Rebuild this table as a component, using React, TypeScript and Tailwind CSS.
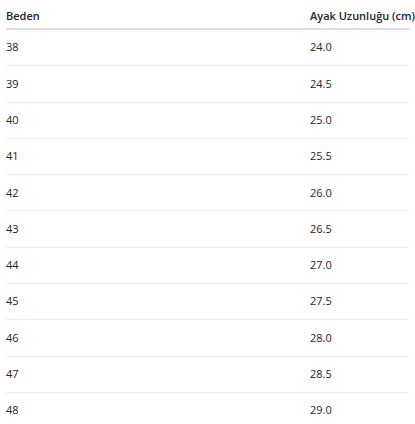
import React from "react";

const rows: [string, string][] = [
  ["38", "24.0"],
  ["39", "24.5"],
  ["40", "25.0"],
  ["41", "25.5"],
  ["42", "26.0"],
  ["43", "26.5"],
  ["44", "27.0"],
  ["45", "27.5"],
  ["46", "28.0"],
  ["47", "28.5"],
  ["48", "29.0"],
];

export default function App() {
  return (
    <div
      className="bg-white px-[6px] text-[11px] text-[#212529]"
      style={{ fontFamily: '"Open Sans", "Noto Sans", sans-serif' }}
    >
      <div className="grid h-[30px] grid-cols-[304px_1fr] items-center border-b-2 border-[#dedede] pt-[4px] font-semibold">
        <div>Beden</div>
        <div className="whitespace-nowrap">Ayak Uzunluğu (cm)</div>
      </div>
      {rows.map(([size, len]) => (
        <div
          key={size}
          className="grid h-[36.3px] grid-cols-[304px_1fr] items-center border-b border-[#eeeeee]"
        >
          <div>{size}</div>
          <div>{len}</div>
        </div>
      ))}
    </div>
  );
}
